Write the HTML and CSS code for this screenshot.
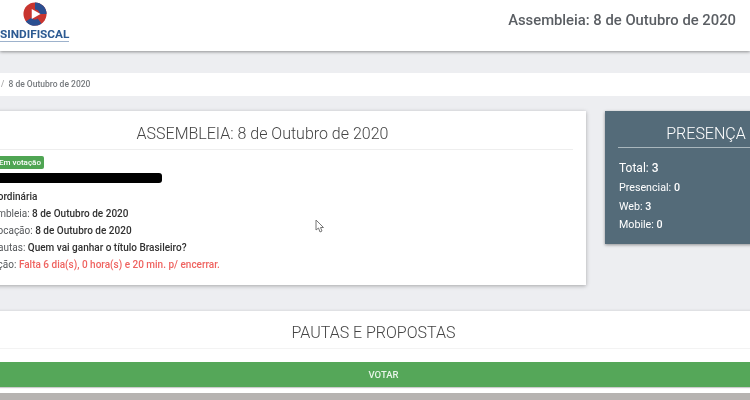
FILE: index.html
```html
<!DOCTYPE html>
<html lang="pt-BR">
<head>
<meta charset="utf-8">
<title>Assembleia: 8 de Outubro de 2020</title>
<link rel="stylesheet" href="styles.css">
</head>
<body>
<div class="screen">
  <header class="topbar">
    <div class="logo">
      <svg class="logo-mark" width="24" height="24" viewBox="0 0 26 26" aria-hidden="true">
        <circle cx="13" cy="13" r="12.5" fill="#c8352f"/>
        <path d="M13 .5A12.5 12.5 0 0 1 25.500 13L18 13A5 5 0 0 0 13 8Z" fill="#2b4f91"/>
        <path d="M3 21A12.500 12.500 0 0 0 20 23.500L16 18A5 5 0 0 1 9 17Z" fill="#2b4f91"/>
        <path d="M9.500 7.500L19 13L9.500 18.500Z" fill="#fff"/>
      </svg>
      <span class="logo-name">SINDIFISCAL</span>
      <span class="logo-rule"></span>
    </div>
    <h1 class="topbar-title">Assembleia: 8 de Outubro de 2020</h1>
  </header>

  <div class="page">
    <nav class="crumbs"><span class="crumb-sep">/</span> 8 de Outubro de 2020</nav>

    <div class="columns">
      <section class="card info">
        <h2 class="card-title">ASSEMBLEIA: 8 de Outubro de 2020</h2>
        <span class="badge">Em votação</span>
        <div class="redacted"></div>
        <p class="row"><b>Extraordinária</b></p>
        <p class="row">Assembleia: <b>8 de Outubro de 2020</b></p>
        <p class="row">Convocação: <b>8 de Outubro de 2020</b></p>
        <p class="row">Nº. Pautas: <b>Quem vai ganhar o título Brasileiro?</b></p>
        <p class="row">Situação: <span class="alert">Falta 6 dia(s), 0 hora(s) e 20 min. p/ encerrar.</span></p>
      </section>

      <aside class="presence">
        <h2 class="presence-title">PRESENÇA</h2>
        <p class="total">Total: <b>3</b></p>
        <p class="stat">Presencial: <b>0</b></p>
        <p class="stat">Web: <b>3</b></p>
        <p class="stat">Mobile: <b>0</b></p>
      </aside>
    </div>

    <section class="pautas">
      <h2 class="pautas-title">PAUTAS E PROPOSTAS</h2>
      <button class="vote">VOTAR</button>
    </section>
  </div>

  <div class="bottom-strip"></div>

  <svg class="cursor" width="10" height="14" viewBox="0 0 10 14" aria-hidden="true">
    <path d="M1 1V11L3.500 9L5 13L7 12L5.500 8.500H8.500Z" fill="#fff" stroke="#777" stroke-width="1"/>
  </svg>
</div>
</body>
</html>
```
FILE: styles.css
```css
* { box-sizing: border-box; }
html, body { margin: 0; padding: 0; }
body {
  background: #edeef1;
  font-family: Roboto, "Liberation Sans", sans-serif;
  color: #333;
}
.screen {
  position: relative;
  width: 750px;
  height: 400px;
  overflow: hidden;
  display: flex;
  flex-direction: column;
  filter: blur(0.35px);
}
.topbar {
  flex: none;
  height: 51px;
  background: #fff;
  box-shadow: 0 1px 3px rgba(0, 0, 0, .4);
  display: flex;
  justify-content: space-between;
  align-items: flex-start;
  padding-right: 14px;
}
.logo {
  display: flex;
  flex-direction: column;
  align-items: flex-start;
  padding-top: 2px;
}
.logo-mark { margin-left: 23px; }
.logo-name {
  font-size: 11.800px;
  font-weight: 700;
  color: #2c5a92;
  line-height: 12px;
  margin-top: 2px;
}
.logo-rule {
  width: 69px;
  height: 1px;
  margin-top: 1px;
  background: #9db2cc;
}
.topbar-title {
  margin: 0;
  font-size: 14.800px;
  font-weight: 500;
  line-height: 40px;
  color: #5a5e63;
}
.page {
  flex: none;
  width: 869px;
  margin-left: -61px;
  padding-top: 22px;
}
.crumbs {
  height: 23px;
  background: #fff;
  padding-left: 62px;
  font-size: 8.500px;
  font-weight: 500;
  line-height: 23px;
  color: #75797d;
}
.crumb-sep { color: #aaa; margin-right: 2px; }
.columns {
  display: flex;
  align-items: flex-start;
  gap: 19px;
  margin-top: 15px;
}
.card {
  background: #fff;
  box-shadow: 0 1px 4px rgba(0, 0, 0, .3);
}
.info {
  flex: none;
  width: 647px;
  height: 174px;
  padding: 0 13px;
}
.card-title {
  margin: 0 0 6px;
  height: 39px;
  border-bottom: 1px solid #eee;
  font-size: 16px;
  font-weight: 300;
  line-height: 45px;
  text-align: center;
  color: #444;
}
.badge {
  display: block;
  width: max-content;
  margin-left: 18px;
  height: 13px;
  padding: 0 3px 0 29px;
  background: #4fa553;
  border-radius: 2px;
  font-size: 8px;
  font-weight: 500;
  line-height: 13px;
  color: #fff;
}
.redacted {
  width: 207px;
  height: 10px;
  margin: 4px 0 0 3px;
  background: #000;
  border-radius: 0 3px 3px 0;
}
.row {
  margin: 0;
  padding-left: 23px;
  font-size: 10px;
  line-height: 17px;
  color: #55585b;
}
.redacted + .row { margin-top: 5px; }
.row b { font-weight: 500; color: #303030; }
.alert { color: #ef6360; font-weight: 500; }
.presence {
  flex: none;
  width: 203px;
  height: 133px;
  padding: 0 14px;
  background: #546b79;
  box-shadow: 0 1px 3px rgba(0, 0, 0, .4);
  color: #fff;
}
.presence-title {
  margin: 0 0 10px -1px;
  height: 37px;
  border-bottom: 1px solid #a9b7bd;
  font-size: 16px;
  font-weight: 300;
  line-height: 46px;
  text-align: center;
}
.total {
  margin: 0 0 1px;
  font-size: 12px;
  line-height: 20px;
}
.stat {
  margin: 0;
  font-size: 10.700px;
  line-height: 18.500px;
}
.total b, .stat b { font-weight: 500; }
.pautas {
  margin-top: 26px;
  height: 82px;
  background: #fff;
  box-shadow: 0 -1px 2px rgba(0, 0, 0, .08);
}
.pautas-title {
  margin: 0 0 13px;
  height: 38px;
  border-bottom: 1px solid #f3f3f3;
  font-size: 16px;
  font-weight: 300;
  line-height: 44px;
  text-align: center;
  color: #444;
}
.vote {
  display: block;
  width: 100%;
  height: 25px;
  border: 0;
  padding: 0 0 0 20px;
  background: #55a759;
  color: #e8f5e9;
  font-family: inherit;
  font-size: 9.500px;
  font-weight: 500;
  box-shadow: 0 1px 1px rgba(0, 0, 0, .2);
}
.bottom-strip {
  flex: 1;
  background: #b6b3b1;
}
.cursor {
  position: absolute;
  left: 315px;
  top: 219px;
}
```
